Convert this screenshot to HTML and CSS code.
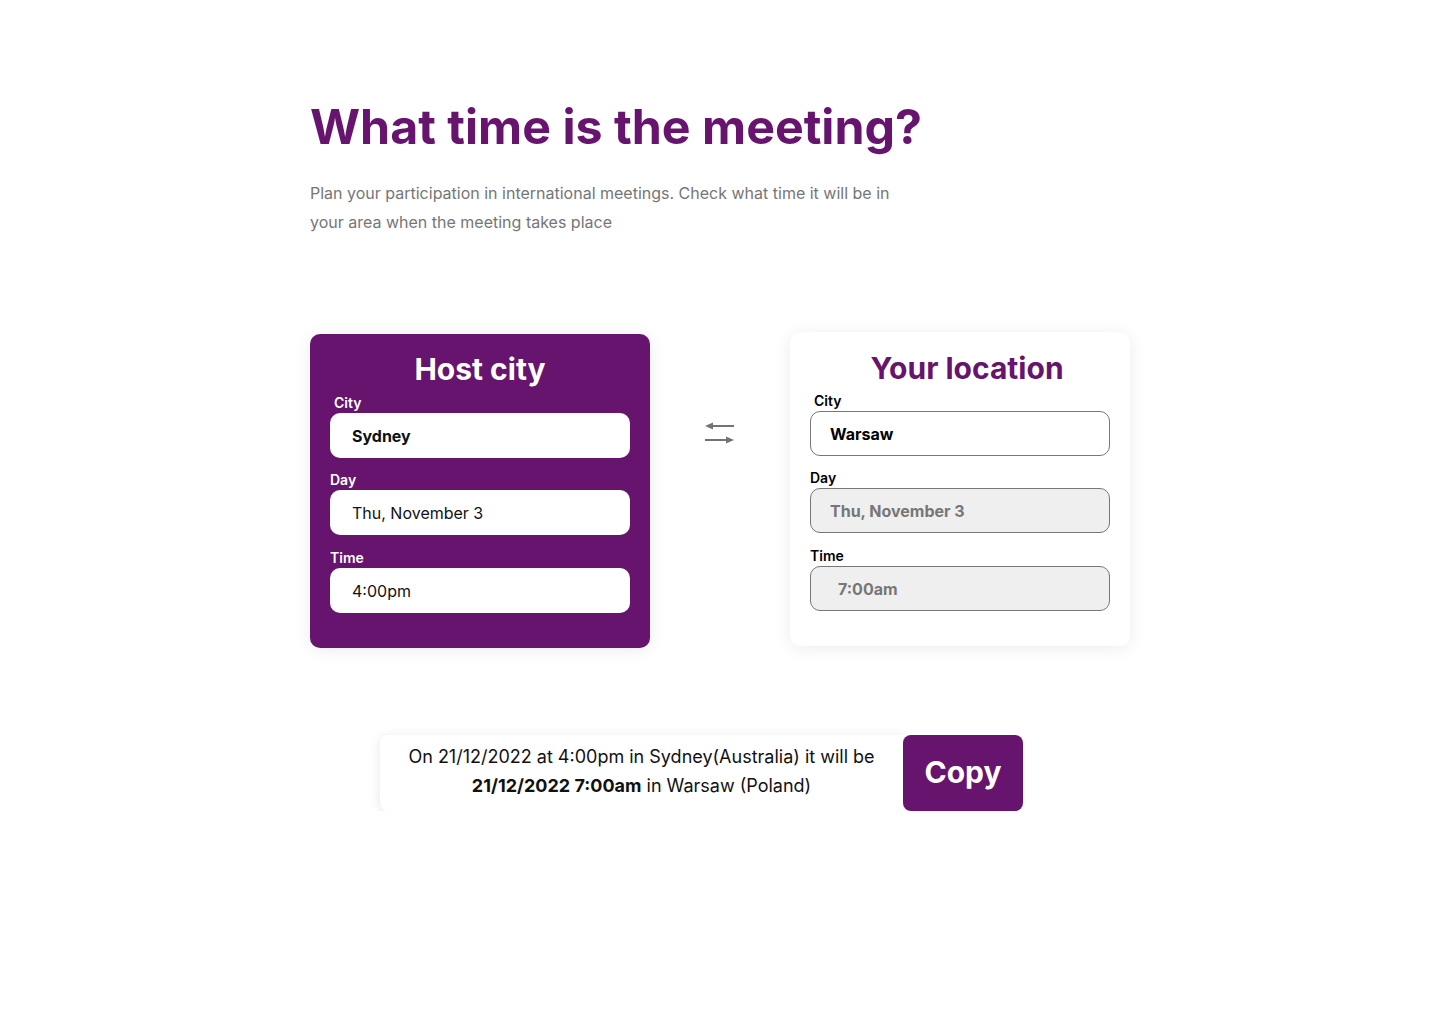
FILE: index.html
```html
<!DOCTYPE html>
<html lang="en">
<head>
<meta charset="utf-8">
<title>What time is the meeting?</title>
<link rel="stylesheet" href="styles.css">
</head>
<body>
<main class="page">
  <h1 class="title">What time is the meeting?</h1>
  <p class="lead">Plan your participation in international meetings. Check what time it will be in your area when the meeting takes place</p>

  <section class="cards">
    <div class="card card-host">
      <h2 class="card-title">Host city</h2>
      <div class="field">
        <label class="label label-city">City</label>
        <div class="input input-bold">Sydney</div>
      </div>
      <div class="field">
        <label class="label">Day</label>
        <div class="input">Thu, November 3</div>
      </div>
      <div class="field field-last">
        <label class="label">Time</label>
        <div class="input">4:00pm</div>
      </div>
    </div>

    <button class="swap" aria-label="Swap">
      <svg width="30" height="21" viewBox="0 0 30 21">
        <path d="M7 3 H29" stroke="#737373" stroke-width="2" fill="none"/>
        <path d="M0 3 L8 -0.5 L8 6.5 Z" fill="#737373"/>
        <path d="M0 17 H22" stroke="#737373" stroke-width="2" fill="none"/>
        <path d="M29 17 L21 13.5 L21 20.5 Z" fill="#737373"/>
      </svg>
    </button>

    <div class="card card-local">
      <h2 class="card-title card-title-local">Your location</h2>
      <div class="field">
        <label class="label label-city">City</label>
        <div class="input input-outline input-bold">Warsaw</div>
      </div>
      <div class="field">
        <label class="label">Day</label>
        <div class="input input-disabled">Thu, November 3</div>
      </div>
      <div class="field field-last">
        <label class="label">Time</label>
        <div class="input input-disabled input-time">7:00am</div>
      </div>
    </div>
  </section>

  <section class="result">
    <div class="result-text">On 21/12/2022 at 4:00pm in Sydney(Australia) it will be <strong>21/12/2022 7:00am</strong> in Warsaw (Poland)</div>
    <button class="copy">Copy</button>
  </section>
</main>
</body>
</html>
```

FILE: styles.css
```css
* { box-sizing: border-box; }
html, body { margin: 0; padding: 0; background: #ffffff; }
body { font-family: Inter, "Noto Sans", sans-serif; color: #111; }

.page {
  width: 820px;
  margin: 0 auto;
  padding-top: 98px;
}

.title {
  margin: 0;
  font-size: 48.3px;
  line-height: 58px;
  font-weight: 700;
  color: #66146e;
  letter-spacing: 0;
}

.lead {
  margin: 23px 0 0;
  width: 590px;
  font-size: 16px;
  line-height: 29px;
  color: #767676;
}

.cards {
  margin-top: 95px;
  display: flex;
  align-items: flex-start;
  justify-content: space-between;
}

.card {
  width: 340px;
  border-radius: 10px;
  padding: 18px 20px 35px;
  box-shadow: 0 2px 18px rgba(0, 0, 0, 0.08);
}

.card-host {
  background: #66146e;
  color: #fff;
  margin-top: 2px;
  padding-top: 17px;
}
.card-local { background: #fff; color: #000; }

.card-title {
  margin: 0 0 7px;
  text-align: center;
  font-size: 30px;
  line-height: 36px;
  font-weight: 700;
}
.card-title-local { color: #66146e; padding-left: 14px; margin-bottom: 6px; }

.field + .field { margin-top: 13px; }
.field + .field-last { margin-top: 14px; }

.label {
  display: block;
  font-size: 14px;
  line-height: 17px;
  font-weight: 600;
  margin-bottom: 2px;
}
.label-city { padding-left: 4px; }

.input {
  height: 45px;
  border-radius: 10px;
  background: #fff;
  color: #111;
  display: flex;
  align-items: center;
  padding-left: 22px;
  font-size: 16px;
}
.input-bold { font-weight: 700; }
.input-outline { border: 1px solid #777; padding-left: 19px; color: #000; }
.input-disabled {
  border: 1px solid #777;
  background: #efefef;
  color: #777;
  font-weight: 700;
  padding-left: 19px;
}
.input-time { padding-left: 27px; }

.swap {
  border: 0;
  background: none;
  padding: 0;
  width: 30px;
  height: 21px;
  margin-top: 91px;
  display: block;
}
.swap svg { display: block; overflow: visible; }

.result {
  margin-top: 87px;
  margin-left: 70px;
  display: flex;
  align-items: stretch;
}

.result-text {
  width: 523px;
  background: #fff;
  border-radius: 8px 0 0 8px;
  box-shadow: 0 2px 12px rgba(0, 0, 0, 0.1);
  padding: 7px 10px 11px;
  text-align: center;
  font-size: 18px;
  line-height: 29px;
  color: #111;
}
.result-text strong { font-weight: 700; }

.copy {
  width: 120px;
  height: 76px;
  border: 0;
  border-radius: 8px;
  background: #66146e;
  color: #fff;
  font-family: Inter, "Noto Sans", sans-serif;
  font-size: 30px;
  font-weight: 700;
  padding: 0 0 2px;
}
```
